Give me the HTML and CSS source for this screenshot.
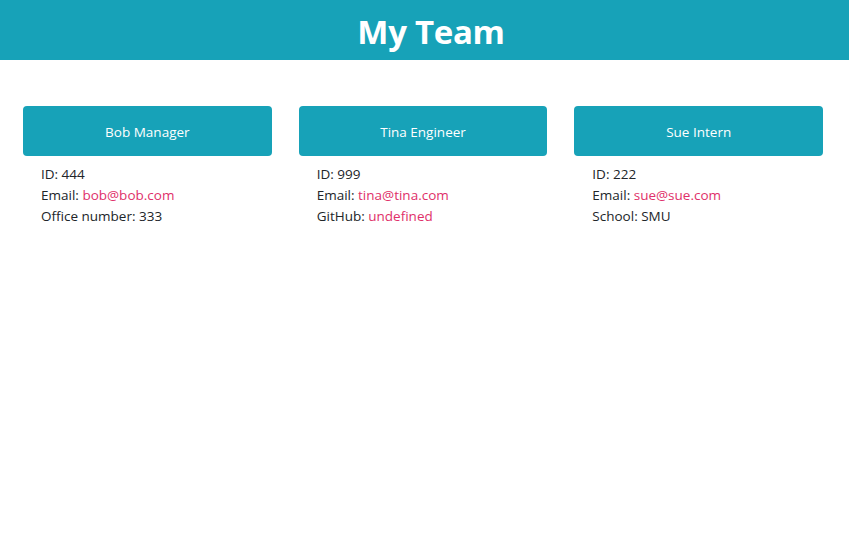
FILE: index.html
```html
<!DOCTYPE html>
<html>
<head>
<meta charset="utf-8">
<title>My Team</title>
<link rel="stylesheet" href="styles.css">
</head>
<body>
<header class="banner"><h1 class="banner-title">My Team</h1></header>
<main class="team">
  <section class="member">
    <div class="member-head">Bob Manager</div>
    <ul class="member-info">
      <li>ID: 444</li>
      <li>Email: <a class="link" href="#">bob@bob.com</a></li>
      <li>Office number: 333</li>
    </ul>
  </section>
  <section class="member">
    <div class="member-head">Tina Engineer</div>
    <ul class="member-info">
      <li>ID: 999</li>
      <li>Email: <a class="link" href="#">tina@tina.com</a></li>
      <li>GitHub: <a class="link" href="#">undefined</a></li>
    </ul>
  </section>
  <section class="member">
    <div class="member-head">Sue Intern</div>
    <ul class="member-info">
      <li>ID: 222</li>
      <li>Email: <a class="link" href="#">sue@sue.com</a></li>
      <li>School: SMU</li>
    </ul>
  </section>
</main>
</body>
</html>
```
FILE: styles.css
```css
* { box-sizing: border-box; }
body {
  margin: 0;
  background: #fff;
  font-family: "Open Sans", "Noto Sans", sans-serif;
  color: #212529;
}
.banner {
  background: #17a2b8;
  height: 60px;
  display: flex;
  align-items: center;
  justify-content: center;
  padding: 3px 0 0 13px;
}
.banner-title {
  margin: 0;
  color: #fff;
  font-size: 33px;
  font-weight: 700;
  letter-spacing: -0.3px;
}
.team {
  display: flex;
  gap: 27px;
  padding: 46px 26px 0 23px;
}
.member { flex: 1; }
.member-head {
  background: #17a2b8;
  color: #fff;
  height: 50px;
  border-radius: 4px;
  display: flex;
  align-items: center;
  justify-content: center;
  padding-top: 2px;
  font-size: 13.5px;
}
.member-info {
  list-style: none;
  margin: 8px 0 0;
  padding: 0 0 0 18px;
  font-size: 13.5px;
  line-height: 21px;
}
.link {
  color: #e0306a;
  text-decoration: none;
}
```
